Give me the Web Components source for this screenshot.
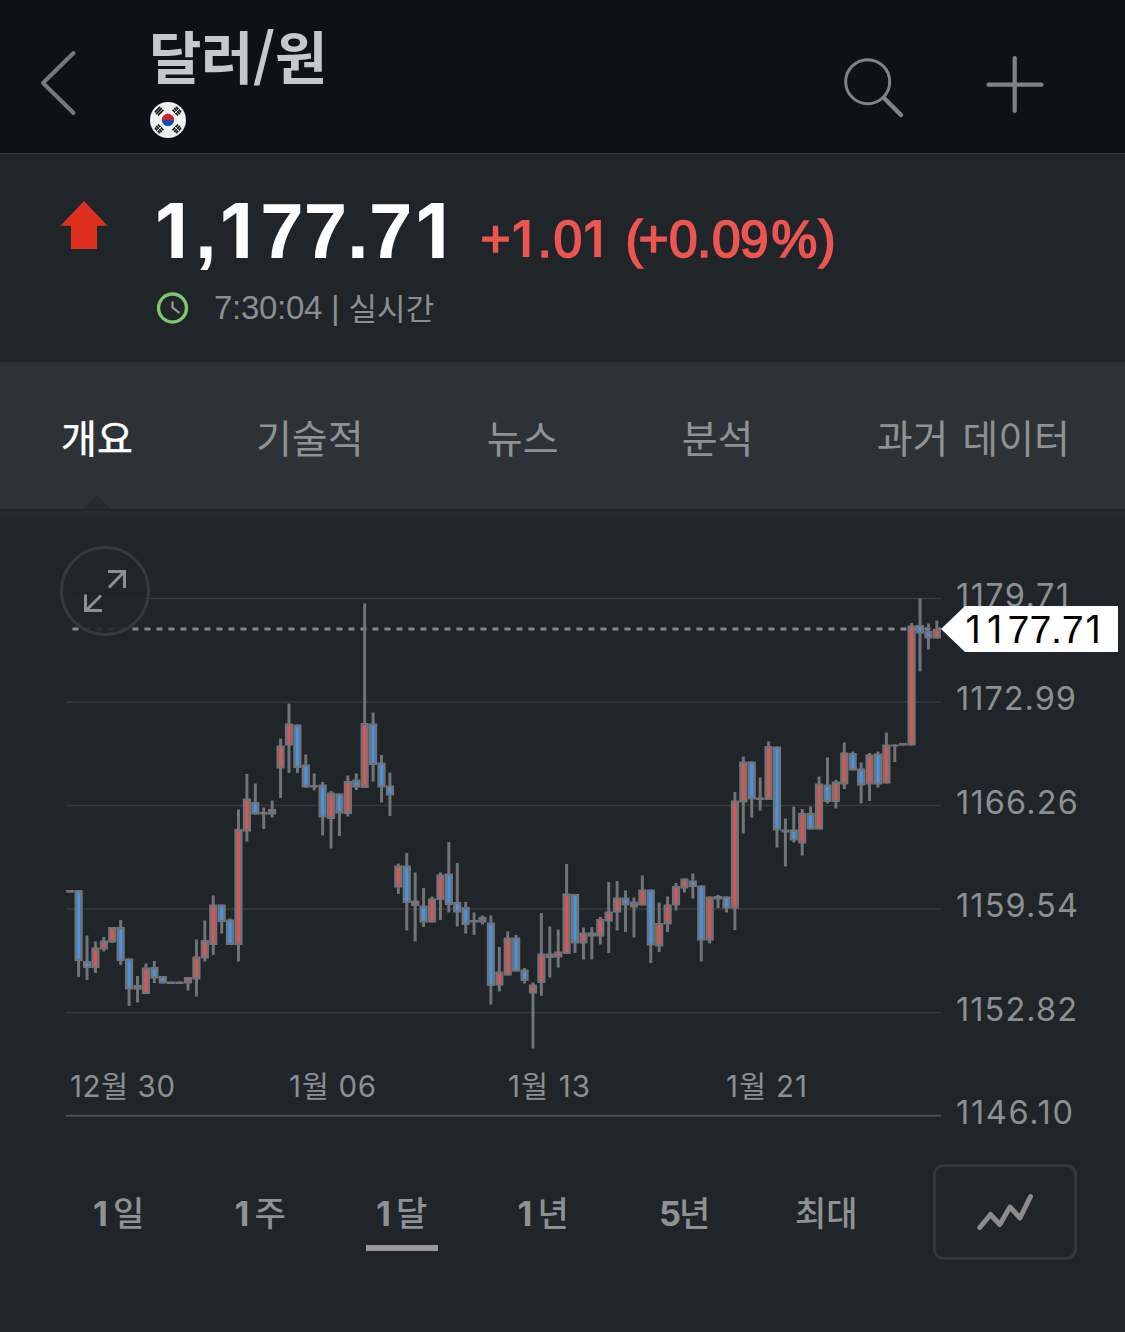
<!DOCTYPE html>
<html lang="ko">
<head>
<meta charset="utf-8">
<title>달러/원</title>
<style>
html,body{margin:0;padding:0;background:#20252a}
body{width:1125px;height:1332px;overflow:hidden;font-family:"Liberation Sans","Noto Sans CJK KR",sans-serif}
</style>
</head>
<body>
<quote-app></quote-app>
<script>
const define = (name, html, setup) => customElements.define(name, class extends HTMLElement {
  constructor() {
    super();
    this.attachShadow({ mode: 'open' });
  }
  connectedCallback() {
    if (this.shadowRoot.childNodes.length) return;
    const t = document.createElement('template');
    t.innerHTML = html;
    this.shadowRoot.append(t.content.cloneNode(true));
    if (setup) setup(this, this.shadowRoot);
  }
});

define('top-bar', `
<style>
:host{display:flex;height:153px;background:#0e1116;border-bottom:1px solid #393d41;box-sizing:content-box}
svg{display:block}
.back{width:150px}
.name{flex:1;display:flex;flex-direction:column;align-items:flex-start}
h1{margin:17px 0 0 -1px;height:85px;font:700 57px/74px "Noto Sans CJK KR",sans-serif;letter-spacing:-.4px;color:#c5c9ce;white-space:nowrap}
</style>
<svg class="back" width="150" height="153" fill="none" stroke="#777a7d" stroke-width="4" stroke-linecap="round" stroke-linejoin="round"><path d="M73.5 53 43 83l30.500 30"/></svg>
<div class="name"><h1><slot></slot></h1>
<svg width="36" height="36" viewBox="-18 -18 36 36"><circle r="18" fill="#f1f1f2"/><path d="M-6.200 0a6.200 6.200 0 0 1 12.400 0z" fill="#cb2430"/><path d="M-6.200 0a6.200 6.200 0 0 0 12.400 0z" fill="#184fae"/>
<g stroke="#16181a" stroke-width="1.700"><path d="M-11.800-6.200-6.200-11.800M-10.100-4.600-4.600-10.100M-13.100-7.900-7.900-13.100"/>
<path d="M11.800 6.200 6.200 11.800M10.100 4.600 4.600 10.100M13.100 7.900 7.900 13.100M11.800-6.200 6.200-11.800M10.100-4.600 4.600-10.100M13.100-7.900 7.900-13.100M-11.800 6.200-6.200 11.800M-10.100 4.600-4.600 10.100M-13.100 7.900-7.900 13.100"/></g>
<path d="M6 6l7 7M6-6l7-7M-6 6l-7 7" stroke="#f1f1f2" stroke-width="1"/></svg></div>
<svg width="290" height="153" fill="none" stroke="#808386" stroke-linecap="round"><circle cx="32.700" cy="81.700" r="22" stroke-width="3"/><path d="M49 98l17 17" stroke-width="4.500"/><path d="M153.500 84.700h53M179.700 58v53" stroke-width="4.200"/></svg>
`);

/* The figure 1 is drawn without a foot, so it takes its own face within each number. */
const figures = s => s.replace(/1/g, '<tspan class="one">1</tspan>');

define('price-quote', `
<style>
:host{display:flex;height:208px}
svg{display:block}
.arrow{width:157px;height:208px;flex:none}
.col{display:flex;flex-direction:column}
.price{font:700 78px "Liberation Sans",sans-serif;fill:#fff}
.price .one{font:700 76px Inter,sans-serif}
.chg{font:400 51.500px "Liberation Sans",sans-serif;fill:#ec5550;stroke:#ec5550;stroke-width:1.700px}
.chg .one{font:600 51px Inter,sans-serif;stroke-width:0}
.time{display:flex;align-items:center;height:72px;color:#8c8e90;white-space:nowrap;font:400 33px/40px "Liberation Sans","Noto Sans CJK KR",sans-serif}
.t{margin-left:25px;letter-spacing:-.3px}
.s{margin-left:9px}
.k{margin:-2px 0 0 9px;font:400 31px/40px "Noto Sans CJK KR",sans-serif}
</style>
<svg class="arrow"><path d="M84 47 107.500 71.700H97V95H71V71.700H60.500z" fill="#de301f"/></svg>
<div class="col">
<svg width="968" height="118" viewBox="157 154 968 118" overflow="visible">
<text class="price" y="258" x="155 195 220 260.300 303.700 347.100 369.100 415.800">${figures('1,177.71')}</text>
<text class="chg" y="256.500" x="480.500 511.500 537.500 553.500 583 611 625.500 638.500 669 697 712 740 771.500 818.500">${figures('+1.01 (+0.09%)')}</text>
</svg>
<div class="time"><svg width="32" height="32" fill="none"><circle cx="15.500" cy="16" r="14" stroke="#7fc56c" stroke-width="3.400"/><path d="M15.500 9.500V15.500l7 5.500" stroke="#9a9c9e" stroke-width="2.200"/></svg><span class="t">7:30:04</span><span class="s">|</span><span class="k">실시간</span></div>
</div>
`);

define('tab-item', `
<style>
:host{display:flex;position:relative;align-items:center;height:147px;color:#8f9193;font:400 39px/50px "Noto Sans CJK KR",sans-serif;white-space:nowrap;word-spacing:3px}
:host([active]){color:#fff;-webkit-text-stroke:.5px #fff}
.n{display:none;position:absolute;left:50%;bottom:0;margin-left:-14px}
:host([active]) .n{display:block}
</style>
<slot></slot><svg class="n" width="28" height="14"><path d="M0 14 14 0 28 14z" fill="#262b2f"/></svg>
`);

define('tab-strip', `
<style>
:host{display:flex;justify-content:space-between;height:147px;padding:0 55px 0 61px;box-sizing:border-box;background:#2d3236}
</style><slot></slot>
`);

/* slot, high, body top, body bottom, low, kind: r = rise, b = fall, g = flat */
const CANDLES = `0 890 890 892.500 892.500 g
1 890 890 961 977 b
2 935.500 961 968 980 b
3 941.500 947.500 968 973 r
4 937 940.500 949.500 951.500 r
5 927 927 942.500 943 r
6 920 927 961 965 b
7 958.500 958.500 989.500 1006 b
8 976 985 989.500 1002.500 g
9 963.500 967.500 994 994 r
10 961 967 978.500 983 b
11 976 976 983.500 983.500 b
12 981.500 981.500 984 984 g
13 981.500 981.500 984 984 g
14 977 977 983.500 990.500 r
15 939.500 956.500 979.500 996.500 r
16 920.500 940 958.500 961.500 r
17 895.500 904.500 945 955 r
18 904.500 904.500 922 933.500 b
19 918.500 919.500 945 945 b
20 809.500 829 945 961.500 r
21 774 798.500 831.500 841.500 r
22 783.500 802 814.500 814.500 b
23 807.500 812 814.500 829 g
24 800.500 809 814.500 817.500 g
25 738.500 745.500 768.500 798 r
26 703.500 723.500 745.500 773 r
27 724.500 724.500 768 773 b
28 754.500 764.500 787.500 787.500 b
29 773.500 785 787.500 790.500 g
30 782 784.500 817.500 835.500 b
31 791 792.500 819 848.500 r
32 793.500 793.500 813.500 836 b
33 775.500 781 814 816.500 r
34 773.500 779.500 787.500 790 b
35 603.500 723 788 788 r
36 712.500 723.500 765 781.500 b
37 755 762.500 787.500 802.500 b
38 772.500 785.500 795.500 816 b
39 863.500 865.500 887.500 894 r
40 853 865.500 903 930.500 b
41 872.500 900.500 906 941.500 g
42 888 905.500 922.500 927 b
43 896.500 898.500 922.500 922.500 r
44 872.500 874.500 900 920 r
45 842 873.500 905 912.500 b
46 863 902 912.500 926.500 b
47 902 907 925 933.500 b
48 912.500 920 922.500 935 g
49 915.500 917 922.500 924.500 g
50 915.500 922.500 986 1004.500 b
51 947 971.500 985.500 991.500 r
52 931.500 937.500 975.500 975.500 r
53 935 937.500 971.500 971.500 b
54 968 969.500 981 983.500 b
55 982.500 984.500 993.500 1048.500 r
56 913 953.500 983 996 r
57 926.500 953.500 958 977.500 g
58 929.500 951.500 957.500 967.500 r
59 864 893.500 954 954 r
60 894 894 943.500 953 b
61 927.500 932.500 943.500 959.500 r
62 927 932.500 936.500 959.500 g
63 917 919 936.500 944.500 r
64 882 911.500 921.500 953 r
65 881 897.500 912.500 930.500 r
66 890.500 897.500 905.500 932 b
67 897.500 901.500 907.500 937.500 g
68 875.500 889.500 905.500 905.500 r
69 889.500 889.500 945.500 963 b
70 902.500 923 946.500 952 r
71 896.500 904.500 924.500 932 r
72 883 886 905.500 910.500 r
73 878.500 878.500 888.500 892.500 r
74 873.500 880.500 887 898.500 b
75 885.500 885.500 940.500 961.500 b
76 896.500 896.500 940.500 943.500 r
77 895 896 899.500 908 g
78 896.500 896.500 908.500 912.500 b
79 792 800.500 908.500 930 r
80 756.500 761.500 802.500 833.500 r
81 761.500 761.500 799.500 817.500 b
82 777.500 797.500 800 810.500 g
83 741.500 746 800 800 r
84 746.500 746.500 830.500 847.500 b
85 818.500 829.500 832.500 866.500 g
86 806.500 829.500 840.500 842.500 b
87 809 813 843.500 855.500 r
88 806.500 813 829.500 829.500 b
89 776.500 783.500 829.500 829.500 r
90 757.500 784.500 802 803.500 b
91 780 781.500 802 808.500 r
92 742.500 752.500 784.500 789 r
93 751.500 753 770.500 770.500 b
94 762.500 768.500 785.500 803.500 b
95 753 754.500 784.500 801 r
96 751.500 753.500 784.500 787.500 b
97 732.500 744.500 783.500 783.500 r
98 744.500 744.500 746.500 762 g
99 743 743 745.500 745.500 g
100 623 625.500 745.500 745.500 r
101 598.500 625 633.500 671.500 b
102 623.500 631 638.500 649.500 b
103 620.500 629 638.500 638.500 r`;

define('candle-chart', `
<style>
:host{display:block;height:637px;background:linear-gradient(#1e2327 0 1px,#262b2f 2px,#252a2e 6px,#20252a 12px)}
svg{display:block}
text{font-family:Inter,"Noto Sans CJK KR",sans-serif;fill:#8d8f91}
.y{font-size:32.500px}
.x{font-size:29.500px}
.tag{font-family:"Liberation Sans",sans-serif;font-size:39.500px;fill:#000}
.tag .one{font-family:Inter,sans-serif;font-size:37.500px}
</style>
<svg width="1125" height="637" viewBox="0 509 1125 637">
<g id="grid"></g>
<path d="M72.500 629H941" stroke="#85888a" stroke-width="3" stroke-dasharray="6 6"/>
<g id="candles"></g>
<g fill="none"><circle cx="105" cy="591" r="43.500" fill="#20252a" fill-opacity=".88" stroke="#34393d" stroke-width="3"/>
<path d="M108 571.500h16.500V588M109 587.500 124.500 571.500M85.500 594.500V610.500H102M101 595.500 86 610.500" stroke="#8d8f91" stroke-width="3"/></g>
<g id="labels"></g>
<path d="M941 629 965 606H1118V652H965z" fill="#fff"/>
<text class="tag" y="643" x="965.500 987 1007.400 1029.500 1051 1061.800 1085.500">${figures('1177.71')}</text>
</svg>`, (host, root) => {
  const grid = [598.5, 702, 805.5, 909, 1012.5].map(y =>
    `<path d="M66 ${y}H941" stroke="#373b3f" stroke-width="1.500"/>`).join('') +
    '<path d="M66 1115.800H941" stroke="#4b4f52" stroke-width="2"/>';
  const fill = { r: '#e9504b', b: '#3d95f5' };
  let bodies = '';
  for (const line of CANDLES.split('\n')) {
    const [i, hi, top, bot, lo, kind] = line.split(' ');
    const x = 70.2 + 8.414 * i, h = bot - top;
    bodies += `<rect x="${x - 1.5}" y="${hi}" width="3" height="${lo - hi}" fill="#707478"/>` +
      `<rect x="${x - 4.1}" y="${top}" width="8.200" height="${h}" fill="#707478"/>`;
    if (fill[kind]) {
      const inset = h > 8 ? 2.2 : h * 0.32;
      bodies += `<rect x="${x - 1.4}" y="${+top + inset}" width="2.800" height="${h - inset * 2}" fill="${fill[kind]}"/>`;
    }
  }
  const ys = [['1179.71', 607, 113], ['1172.99', 710, 120], ['1166.26', 814, 122], ['1159.54', 917, 122], ['1152.82', 1021, 121], ['1146.10', 1124, 117]];
  const xs = [['12월 30', 70, 105], ['1월 06', 289, 87], ['1월 13', 508, 82], ['1월 21', 726, 81]];
  const text = (c, t, x, y, w) => `<text class="${c}" x="${x}" y="${y}" textLength="${w}">${t}</text>`;
  root.getElementById('grid').innerHTML = grid;
  root.getElementById('candles').innerHTML = bodies;
  root.getElementById('labels').innerHTML =
    ys.map(([t, y, w]) => text('y', t, 956, y, w)).join('') +
    xs.map(([t, x, w]) => text('x', t, x, 1097, w)).join('');
});

define('range-item', `
<style>
:host{display:flex;flex:1;flex-direction:column;align-items:center;height:105px;color:#8f9193;font:500 34px/50px "Noto Sans CJK KR",sans-serif;white-space:nowrap}
b{width:20px;padding-top:2px;font:700 34.500px/50px Inter,sans-serif}
div{display:flex;padding-top:41px;height:58px}
:host([active])::after{content:"";width:72px;height:6px;background:#999697}
</style>
<div><b></b><slot></slot></div>
`, (host, root) => {
  const count = host.getAttribute('count');
  if (count) root.querySelector('b').textContent = count;
  else root.querySelector('b').remove();
});

define('range-bar', `
<style>
:host{display:flex;padding-left:48px;height:186px;box-sizing:border-box}
nav{display:flex;width:849px}
.btn{box-sizing:border-box;margin:18px 0 0 36px;width:144px;height:96px;border:3px solid #33383c;border-radius:11px}
svg{display:block}
</style>
<nav><slot></slot></nav>
<div class="btn"><svg width="138" height="90" viewBox="936 1167 138 90" fill="none" stroke="#8d8b8b" stroke-width="5" stroke-linecap="round" stroke-linejoin="round"><path d="M979.800 1227.500 990.500 1214.500 999.800 1224.500 1010 1207 1020 1218 1030.500 1196.500"/></svg></div>
`);

define('quote-app', `
<style>:host{display:flex;flex-direction:column;width:1125px;height:1332px;background:#20252a}</style>
<top-bar>달러/원</top-bar>
<price-quote></price-quote>
<tab-strip><tab-item active>개요</tab-item><tab-item>기술적</tab-item><tab-item>뉴스</tab-item><tab-item>분석</tab-item><tab-item>과거 데이터</tab-item></tab-strip>
<candle-chart></candle-chart>
<range-bar><range-item count="1">일</range-item><range-item count="1">주</range-item><range-item count="1" active>달</range-item><range-item count="1">년</range-item><range-item count="5">년</range-item><range-item>최대</range-item></range-bar>
`);
</script>
</body>
</html>
